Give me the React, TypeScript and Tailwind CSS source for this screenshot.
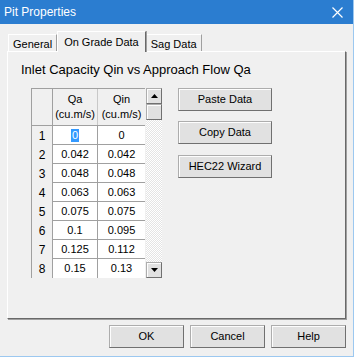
import React from 'react';

const rows = [
  ['1', '0', '0'],
  ['2', '0.042', '0.042'],
  ['3', '0.048', '0.048'],
  ['4', '0.063', '0.063'],
  ['5', '0.075', '0.075'],
  ['6', '0.1', '0.095'],
  ['7', '0.125', '0.112'],
  ['8', '0.15', '0.13'],
];

const btn =
  'flex items-center justify-center bg-[#e1e1e1] border border-[#adadad] border-r-[#707070] border-b-[#707070] shadow-[inset_1px_1px_0_#fdfdfd] text-[11px] text-black';

const Tab = ({ label, active }: { label: string; active?: boolean }) => {
  if (active) {
    return (
      <div className="relative z-10 -mb-[1px] flex h-[21px] items-start border-l border-t border-r border-l-white border-t-white border-r-[#696969] bg-[#f0f0f0] px-[6px] pt-[2px] text-[11px] shadow-[1px_0_0_#a0a0a0]">
        {label}
      </div>
    );
  }
  return (
    <div className="flex h-[17px] items-start border-l border-t border-r border-l-white border-t-white border-r-[#a0a0a0] px-[4px] pt-[1px] text-[11px]">
      {label}
    </div>
  );
};

const Arrow = ({ up }: { up?: boolean }) => (
  <svg width="7" height="4" viewBox="0 0 7 4">
    {up ? <path d="M0 4 L3.5 0 L7 4 Z" fill="#000" /> : <path d="M0 0 L3.5 4 L7 0 Z" fill="#000" />}
  </svg>
);

const Grid = () => (
  <div className="flex">
    <div className="flex flex-col border-l border-t border-[#a0a0a0]">
      <div className="flex h-[37px] border-b border-[#a0a0a0]">
        <div className="w-[21px] border-r border-[#a0a0a0]" />
        <div className="flex w-[45px] flex-col items-center justify-center border-r border-[#c8c8c8] leading-[15px]">
          <span>Qa</span>
          <span>(cu.m/s)</span>
        </div>
        <div className="flex w-[47px] flex-col items-center justify-center leading-[15px]">
          <span>Qin</span>
          <span>(cu.m/s)</span>
        </div>
      </div>
      {rows.map(([n, qa, qin], i) => (
        <div key={n} className="flex h-[19px]">
          <div className="flex w-[21px] items-center justify-center border-r border-[#a0a0a0] text-[12px]">
            {n}
          </div>
          <div className={`flex w-[45px] items-center justify-center border-r border-[#a0a0a0] bg-white ${i < 7 ? 'border-b' : ''}`}>
            {i === 0 ? <span className="bg-[#3399ff] px-[1px] leading-[13px] text-white">{qa}</span> : qa}
          </div>
          <div className={`flex w-[47px] items-center justify-center border-[#a0a0a0] bg-white ${i < 7 ? 'border-b' : ''}`}>
            {qin}
          </div>
        </div>
      ))}
    </div>
    <div className="ml-[1px] flex w-[16px] flex-col">
      <div className={`${btn} h-[16px] w-[16px]`}>
        <Arrow up />
      </div>
      <div className={`${btn} h-[16px] w-[16px]`} />
      <div className="flex-1 bg-[repeating-conic-gradient(#e4e4e4_0_25%,#ffffff_0_50%)] bg-[length:2px_2px]" />
      <div className={`${btn} h-[16px] w-[16px]`}>
        <Arrow />
      </div>
    </div>
  </div>
);

export default function App() {
  return (
    <div
      className="flex h-[357px] w-[354px] flex-col border-r border-b border-[#9cc8f0] bg-[#f0f0f0] text-[11px] text-black"
      style={{ fontFamily: '"Liberation Sans", Arial, sans-serif' }}
    >
      <div className="flex h-[24px] items-center justify-between bg-[#2b7dd0] pl-[4px] pr-[10px] text-[12px] text-white">
        <span>Pit Properties</span>
        <svg width="11" height="11" viewBox="0 0 11 11">
          <path d="M0.5 0.5 L10.5 10.5 M10.5 0.5 L0.5 10.5" stroke="#fff" strokeWidth="1.2" />
        </svg>
      </div>
      <div className="flex flex-col px-[7px] pt-[7px]">
        <div className="flex items-end pl-[1px]">
          <Tab label="General" />
          <Tab label="On Grade Data" active />
          <Tab label="Sag Data" />
        </div>
        <div className="flex h-[268px] w-[339px] flex-col border border-l-white border-t-white border-r-[#696969] border-b-[#696969] shadow-[1px_1px_0_#a0a0a0] pl-[13px] pt-[11px]">
          <div className="text-[13px] leading-[14px]">Inlet Capacity Qin vs Approach Flow Qa</div>
          <div className="mt-[11px] flex gap-[16px] pl-[10px]">
            <Grid />
            <div className="flex flex-col gap-[10px]">
              <div className={`${btn} h-[23px] w-[94px]`}>Paste Data</div>
              <div className={`${btn} h-[23px] w-[94px]`}>Copy Data</div>
              <div className={`${btn} mt-[1px] h-[23px] w-[94px]`}>HEC22 Wizard</div>
            </div>
          </div>
        </div>
      </div>
      <div className="mt-[6px] flex justify-end gap-[6px] pr-[7px]">
        <div className={`${btn} h-[23px] w-[75px] border-[#707070]`}>OK</div>
        <div className={`${btn} h-[23px] w-[75px]`}>Cancel</div>
        <div className={`${btn} h-[23px] w-[75px]`}>Help</div>
      </div>
    </div>
  );
}
